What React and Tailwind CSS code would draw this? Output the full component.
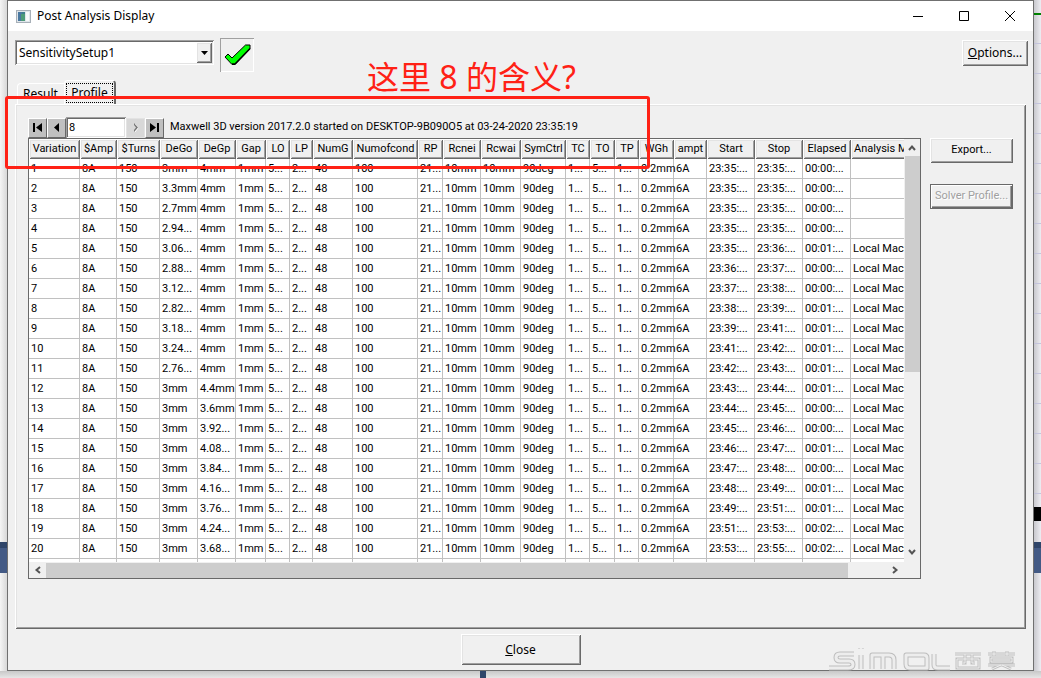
import { useState } from 'react'

const COLUMNS = [
  { name: 'Variation', width: 51 },
  { name: '$Amp', width: 37 },
  { name: '$Turns', width: 43 },
  { name: 'DeGo', width: 38 },
  { name: 'DeGp', width: 38 },
  { name: 'Gap', width: 30 },
  { name: 'LO', width: 24 },
  { name: 'LP', width: 23 },
  { name: 'NumG', width: 40 },
  { name: 'Numofcond', width: 65 },
  { name: 'RP', width: 25 },
  { name: 'Rcnei', width: 38 },
  { name: 'Rcwai', width: 40 },
  { name: 'SymCtrl', width: 45 },
  { name: 'TC', width: 24 },
  { name: 'TO', width: 25 },
  { name: 'TP', width: 24 },
  { name: 'WGh', width: 35 },
  { name: 'ampt', width: 33 },
  { name: 'Start', width: 48 },
  { name: 'Stop', width: 48 },
  { name: 'Elapsed', width: 48 },
  { name: 'Analysis Machine', width: 92 },
]

// DeGo, DeGp, start, stop, elapsed, machine
const RUNS = [
  ['3mm', '4mm', '23:35:...', '23:35:...', '00:00:...', ''],
  ['3.3mm', '4mm', '23:35:...', '23:35:...', '00:00:...', ''],
  ['2.7mm', '4mm', '23:35:...', '23:35:...', '00:00:...', ''],
  ['2.94...', '4mm', '23:35:...', '23:35:...', '00:00:...', ''],
  ['3.06...', '4mm', '23:35:...', '23:36:...', '00:01:...', 'Local Machine'],
  ['2.88...', '4mm', '23:36:...', '23:37:...', '00:00:...', 'Local Machine'],
  ['3.12...', '4mm', '23:37:...', '23:38:...', '00:00:...', 'Local Machine'],
  ['2.82...', '4mm', '23:38:...', '23:39:...', '00:01:...', 'Local Machine'],
  ['3.18...', '4mm', '23:39:...', '23:41:...', '00:01:...', 'Local Machine'],
  ['3.24...', '4mm', '23:41:...', '23:42:...', '00:01:...', 'Local Machine'],
  ['2.76...', '4mm', '23:42:...', '23:43:...', '00:01:...', 'Local Machine'],
  ['3mm', '4.4mm', '23:43:...', '23:44:...', '00:01:...', 'Local Machine'],
  ['3mm', '3.6mm', '23:44:...', '23:45:...', '00:00:...', 'Local Machine'],
  ['3mm', '3.92...', '23:45:...', '23:46:...', '00:00:...', 'Local Machine'],
  ['3mm', '4.08...', '23:46:...', '23:47:...', '00:01:...', 'Local Machine'],
  ['3mm', '3.84...', '23:47:...', '23:48:...', '00:00:...', 'Local Machine'],
  ['3mm', '4.16...', '23:48:...', '23:49:...', '00:01:...', 'Local Machine'],
  ['3mm', '3.76...', '23:49:...', '23:51:...', '00:01:...', 'Local Machine'],
  ['3mm', '4.24...', '23:51:...', '23:53:...', '00:02:...', 'Local Machine'],
  ['3mm', '3.68...', '23:53:...', '23:55:...', '00:02:...', 'Local Machine'],
]

const ROWS = RUNS.map(([dego, degp, start, stop, elapsed, machine], i) => [
  String(i + 1), '8A', '150', dego, degp, '1mm', '5...', '2...', '48', '100', '21...', '10mm', '10mm',
  '90deg', '1...', '5...', '1...', '0.2mm', '6A', start, stop, elapsed, machine,
])

const RAISED = 'bg-[#f0f0f0] shadow-[inset_1px_1px_#fff,inset_-1px_-1px_#696969,inset_2px_2px_#e3e3e3,inset_-2px_-2px_#a0a0a0]'
const SUNKEN = 'bg-white shadow-[inset_1px_1px_#a0a0a0,inset_-1px_-1px_#fff,inset_2px_2px_#696969,inset_-2px_-2px_#e3e3e3]'
const UI_FONT = "font-['Noto_Sans',sans-serif] text-[12px]"
const GRID_FONT = "font-['Roboto',sans-serif] text-[11px]"

function TitleBar() {
  return (
    <header className="flex h-[30px] items-center bg-white pl-2">
      <svg width="15" height="13" viewBox="0 0 15 13" aria-hidden="true">
        <rect width="15" height="13" fill="#a8b0b8" />
        <rect x="1" y="1" width="13" height="11" fill="#dfe5ea" />
        <rect x="2" y="2" width="7" height="9" fill="#3d7f8c" />
        <path d="M2 2h4v9H2z" fill="#4a78a0" />
        <path d="M5 4h4v7H5z" fill="#4d9b78" />
        <rect x="10" y="2" width="3" height="9" fill="#f7f9fa" />
      </svg>
      <h1 className="ml-[6px] flex-1">Post Analysis Display</h1>
      <button aria-label="Minimize" className="flex w-[46px] justify-center">
        <svg width="10" height="10" viewBox="0 0 10 10" stroke="#000"><path d="M0 5.5h10" /></svg>
      </button>
      <button aria-label="Maximize" className="flex w-[46px] justify-center">
        <svg width="10" height="10" viewBox="0 0 10 10" fill="none" stroke="#000"><path d="M.5.5h9v9h-9z" /></svg>
      </button>
      <button aria-label="Close window" className="flex w-[46px] justify-center">
        <svg width="10" height="10" viewBox="0 0 10 10" stroke="#000"><path d="M0 0l10 10M10 0L0 10" /></svg>
      </button>
    </header>
  )
}

function Toolbar() {
  return (
    <div className="flex items-start pt-[7px] pr-[5px] pl-[7px]">
      <div className="relative mt-[2px] h-[25px] w-[199px]">
        <select
          aria-label="Setup"
          className={`h-full w-full appearance-none pl-1 outline-none ${SUNKEN}`}
          defaultValue="SensitivitySetup1"
        >
          <option>SensitivitySetup1</option>
        </select>
        <span className={`pointer-events-none absolute top-[2px] right-[2px] flex h-[21px] w-[16px] items-center justify-center ${RAISED}`}>
          <svg width="7" height="4" viewBox="0 0 7 4"><path d="M0 0h7L3.5 4z" /></svg>
        </span>
      </div>
      <button
        aria-label="Apply"
        className="ml-[6px] flex h-[34px] w-[34px] items-center justify-center shadow-[inset_1px_1px_#a0a0a0,inset_-1px_-1px_#fff]"
      >
        <svg width="27" height="22" viewBox="0 0 27 22">
          <path d="M1 13l3-3 4 4L21.500 1H26v4L11 20.500H8z" fill="#00ff00" stroke="#000" strokeLinejoin="round" />
          <path d="M26 4.500L11 20H8" fill="none" stroke="#000" strokeWidth="1.5" />
        </svg>
      </button>
      <button className={`mt-[2px] ml-auto h-[26px] w-[66px] ${RAISED}`}>
        <u>O</u>ptions...
      </button>
    </div>
  )
}

function Tabs({ tab, onChange }) {
  return (
    <div role="tablist" className="flex items-end pt-2 pl-[9px]">
      <button
        role="tab"
        aria-selected={tab === 'result'}
        className="h-[21px] w-[47px] rounded-tl-sm border-t border-l border-white pl-[5px] text-left"
        onClick={() => onChange('result')}
      >
        Result
      </button>
      <button
        role="tab"
        aria-selected={tab === 'profile'}
        className="h-6 w-[52px] rounded-t-sm border-t border-r-2 border-l border-t-white border-r-[#696969] border-l-white bg-[#f0f0f0] p-px"
        onClick={() => onChange('profile')}
      >
        <span className="block h-[20px] border border-dotted border-black leading-[17px]">Profile</span>
      </button>
    </div>
  )
}

function NavButton({ label, disabled, children }) {
  return (
    <button
      aria-label={label}
      disabled={disabled}
      className="flex h-5 w-[19px] items-center justify-center border border-t-white border-r-[#696969] border-b-[#696969] border-l-white bg-[#c0c0c0] disabled:border-[#e3e3e3] disabled:bg-[#d8d8d8]"
    >
      <svg width="11" height="9" viewBox="0 0 11 9">{children}</svg>
    </button>
  )
}

function RecordNav() {
  return (
    <div className="flex h-[21px] items-center">
      <NavButton label="First"><path d="M1 0h2v9H1zM10 0v9L4 4.5z" /></NavButton>
      <NavButton label="Previous"><path d="M8 0v9L3 4.5z" /></NavButton>
      <input aria-label="Message number" defaultValue="8" className={`h-[21px] w-[60px] pl-[3px] outline-none ${SUNKEN}`} />
      <NavButton label="Next" disabled>
        <path d="M5 1l3 4-3 4" fill="none" stroke="#fff" />
        <path d="M4 0l4 4.5L4 9V7l2-2.500L4 2z" fill="#777" />
      </NavButton>
      <NavButton label="Last"><path d="M1 0l6 4.5L1 9zM8 0h2v9H8z" /></NavButton>
      <p className="ml-[6px] whitespace-nowrap">
        Maxwell 3D version 2017.2.0 started on DESKTOP-9B090O5 at 03-24-2020 23:35:19
      </p>
    </div>
  )
}

function Chevron({ d }) {
  return (
    <svg className="shrink-0" width="8" height="8" viewBox="0 0 8 8" fill="none" stroke="#555" strokeWidth="2">
      <path d={d} />
    </svg>
  )
}

function ProfileGrid() {
  return (
    <div className="border border-[#696969] bg-[#f0f0f0]">
      <div className="flex h-[423px]">
        <div className="min-w-0 flex-1 overflow-hidden bg-white">
          <table className="w-[914px] table-fixed border-separate border-spacing-0">
            <colgroup>
              {COLUMNS.map((c) => <col key={c.name} style={{ width: c.width }} />)}
            </colgroup>
            <thead>
              <tr>
                {COLUMNS.map((c) => (
                  <th
                    key={c.name}
                    className={`h-5 overflow-hidden p-0 text-center leading-[18px] font-normal whitespace-nowrap ${RAISED}`}
                  >
                    {c.name}
                  </th>
                ))}
              </tr>
            </thead>
            <tbody>
              {ROWS.map((row) => (
                <tr key={row[0]}>
                  {row.map((value, i) => (
                    <td
                      key={COLUMNS[i].name}
                      className="h-5 border-r border-b border-[#c0c0c0] py-0 pr-0 pl-[2px] leading-[18px] whitespace-nowrap"
                    >
                      {value}
                    </td>
                  ))}
                </tr>
              ))}
              <tr>
                {COLUMNS.map((c) => <td key={c.name} className="h-5 border-r border-[#c0c0c0] p-0" />)}
              </tr>
            </tbody>
          </table>
        </div>
        <div className="flex w-4 flex-col items-center">
          <span className="flex h-[17px] items-center"><Chevron d="M1 6l3-3.500 3 3.500" /></span>
          <div className="h-[216px] w-[15px] bg-[#cdcdcd]" />
          <span className="mt-auto flex h-5 items-center"><Chevron d="M1 2l3 3.500L7 2" /></span>
        </div>
      </div>
      <div className="flex h-4 items-center">
        <span className="flex w-[17px] justify-center"><Chevron d="M6 1L2.500 4 6 7" /></span>
        <div className="h-[15px] w-11/12 max-w-[802px] bg-[#cdcdcd]" />
        <span className="mr-[21px] ml-auto"><Chevron d="M2 1l3.500 3L2 7" /></span>
      </div>
    </div>
  )
}

const LOGO_LETTERS = [
  'M27 9H13q-4 0-4 3.500t4 3.500h9q4 0 4 3.500t-5 3.500H2',
  'M34 10v14M34 3v1',
  'M45 24V10h17q5 0 5 5v9M56 10v14',
  'M79 10h18q3 0 3 3v10H83q-4 0-4-4z',
  'M107 9v11q0 3 4 3h12',
]
const LOGO_HANZI = 'M128 9h26M130 14h22v9h-22zM138 9v9h-3M145 9v9h3M161 9h27M167 6v5M180 6v5M164 13h21v4h-21zM161 20h27M174 20l-9 4M175 20l9 4'

function Watermark() {
  return (
    <svg
      className="pointer-events-none absolute right-[16px] -bottom-px"
      width="190"
      height="26"
      viewBox="0 0 190 26"
      fill="none"
      aria-hidden="true"
    >
      <path d={LOGO_LETTERS.join('')} stroke="#bdbdbd" strokeWidth="5" strokeLinejoin="round" />
      <path d={LOGO_LETTERS.join('')} stroke="#ededed" strokeWidth="3" strokeLinejoin="round" />
      <path d={LOGO_HANZI} stroke="#c0c0c0" strokeWidth="3" />
      <path d={LOGO_HANZI} stroke="#eee" />
    </svg>
  )
}

function Annotation() {
  return (
    <div className="pointer-events-none absolute top-[58px] right-[391px] left-[5px]">
      <p className="ml-[362px] font-['Noto_Sans','Noto_Sans_CJK_SC',sans-serif] text-[32px] leading-[38px] whitespace-nowrap text-[#ff2115]">
        这里 8 的含义?
      </p>
      <div className="h-[73px] rounded-[3px] border-3 border-[#ff2115]" />
    </div>
  )
}

export default function App() {
  const [tab, setTab] = useState('profile')

  return (
    <div className={`relative flex min-h-screen flex-col bg-[#e6e6e6] text-black ${UI_FONT}`}>
      <div className="flex flex-1">
        <div className="w-[7px] bg-linear-to-r from-[#f5f5f5] to-[#d8d8d8] pt-[542px]">
          <div className="h-[31px] border-t-6 border-[#2f4569] bg-[#435a85]" />
        </div>
        <main className="relative flex min-w-0 flex-1 flex-col border border-[#707070] bg-[#f0f0f0]">
          <TitleBar />
          <Toolbar />
          <Tabs tab={tab} onChange={setTab} />
          <section
            className={`mx-[7px] flex flex-1 items-start gap-[9px] px-[13px] pt-[13px] ${RAISED} ${GRID_FONT}`}
          >
            <div className="min-w-0 flex-1">
              <RecordNav />
              <ProfileGrid />
            </div>
            <div className="flex flex-col gap-[21px] pt-[21px]">
              <button className={`h-[25px] w-[83px] ${RAISED}`}>Export...</button>
              <button
                disabled
                className="h-[25px] w-[83px] border border-[#696969] whitespace-nowrap text-[#a0a0a0] shadow-[inset_1px_1px_#fff,inset_-1px_-1px_#696969,inset_-2px_-2px_#a0a0a0] text-shadow-[1px_1px_0_#fff]"
              >
                Solver Profile...
              </button>
            </div>
          </section>
          <footer className="flex justify-center py-[5px]">
            <button className={`h-[31px] w-[120px] ${RAISED}`}>
              <u>C</u>lose
            </button>
          </footer>
          <Watermark />
        </main>
        <div className="w-[7px] bg-linear-to-r from-[#c9c9ce] to-[#ededf2] pt-[13px]">
          <div className="h-[2px] bg-[#008000]" />
          <div className="h-[492px] bg-[repeating-linear-gradient(to_bottom,transparent_0_28px,#c4c4dc_28px_29px,transparent_29px_30px)]" />
          <div className="h-[14px] bg-black" />
          <div className="mt-[21px] h-[31px] border-t-6 border-[#2f4569] bg-[#435a85]" />
        </div>
      </div>
      <div className="h-[7px] bg-linear-to-b from-[#c8c8c8] to-[#e6e6e6] pl-[480px]">
        <div className="h-full w-[6px] bg-[#2f4569]" />
      </div>
      <Annotation />
    </div>
  )
}
